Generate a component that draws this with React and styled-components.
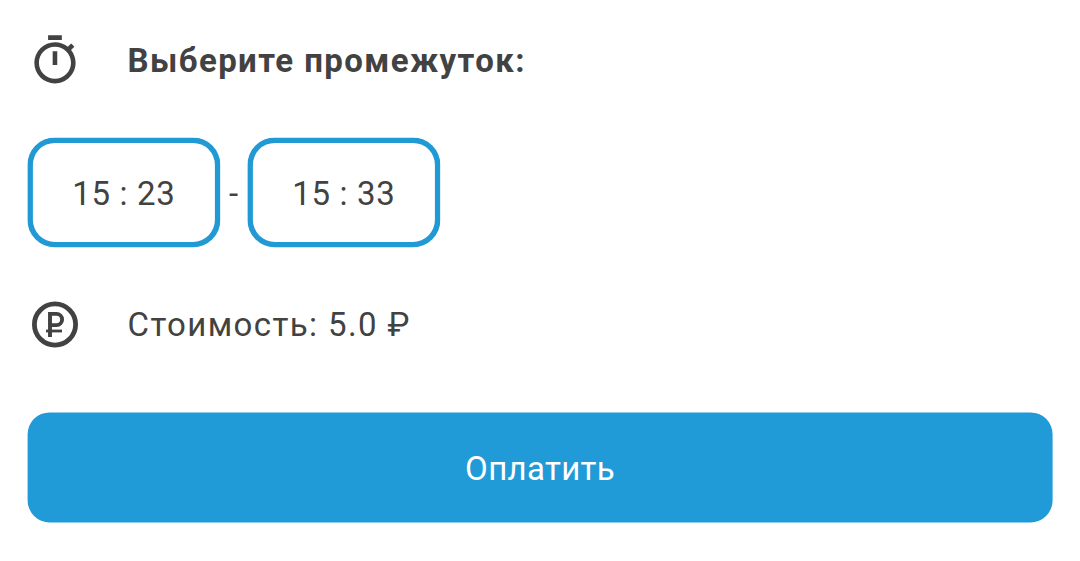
import styled, { createGlobalStyle } from "styled-components";

const GlobalStyle = createGlobalStyle`
  * {
    box-sizing: border-box;
  }
  body {
    margin: 0;
    background-color: #fff;
    color: #424242;
    font-family: Roboto, "Liberation Sans", sans-serif;
    font-size: 33px;
  }
`;

const Page = styled.main`
  height: 561px;
  padding: 33px 27px 0 28px;
`;

const Row = styled.div`
  display: flex;
  align-items: center;
  height: 55px;
  gap: 45.5px;
`;

const Icon = styled.svg`
  width: 55px;
  height: 55px;
  flex-shrink: 0;
  margin-left: -1px;
`;

const Label = styled.span`
  font-weight: ${(props) => (props.$bold ? 700 : 400)};
  letter-spacing: 1.4px;
  line-height: 40px;
  white-space: pre;
`;

const Times = styled.div`
  display: flex;
  align-items: center;
  margin: 49px 0 50px;
`;

const TimeBox = styled.button`
  width: 193px;
  height: 110px;
  padding: 2px 0 0;
  border: 0;
  border-radius: 27.5px;
  box-shadow: inset 0 0 0 5.5px #2099d5;
  background-color: #fff;
  color: inherit;
  font: inherit;
  letter-spacing: 0.7px;
  transform: translate(-0.6px, 0.4px);
`;

const Dash = styled.span`
  width: 27px;
  padding: 2px 2px 0 0;
  text-align: center;
`;

const PayButton = styled.button`
  width: 100%;
  height: 110px;
  margin-top: 60px;
  padding: 2px 0 0;
  border: 0;
  border-radius: 22px;
  background-color: #209bd8;
  color: #fff;
  font: inherit;
  letter-spacing: 0.35px;
  transform: translate(-0.4px, 0.4px);
`;

function TimerIcon() {
  return (
    <Icon viewBox="-0.2 0 24 24" fill="#424242">
      <path d="M15 1H9v2h6V1zm-4 13h2V8h-2v6zm8.03-6.61 1.42-1.42c-.43-.51-.9-.99-1.41-1.41l-1.42 1.42A8.962 8.962 0 0 0 12 4a9 9 0 0 0 0 18c4.98 0 9-4.03 9-9 0-2.12-.74-4.07-1.97-5.61zM12 20c-3.87 0-7-3.13-7-7s3.13-7 7-7 7 3.13 7 7-3.13 7-7 7z" />
    </Icon>
  );
}

function RubleIcon() {
  return (
    <Icon viewBox="0 0 55 55" fill="none" stroke="#424242">
      <circle cx="28" cy="27.5" r="20.6" strokeWidth="4.8" />
      <path
        d="M23 40V16.9h6.5a5.6 5.6 0 0 1 0 11.2H23"
        strokeWidth="3.9"
      />
      <path d="M19 34h16" strokeWidth="2.8" />
    </Icon>
  );
}

export default function App() {
  return (
    <>
      <GlobalStyle />
      <Page>
        <Row>
          <TimerIcon />
          <Label $bold>Выберите промежуток:</Label>
        </Row>
        <Times>
          <TimeBox>15 : 23</TimeBox>
          <Dash>-</Dash>
          <TimeBox>15 : 33</TimeBox>
        </Times>
        <Row>
          <RubleIcon />
          <Label>Стоимость: 5.0 ₽</Label>
        </Row>
        <PayButton>Оплатить</PayButton>
      </Page>
    </>
  );
}
